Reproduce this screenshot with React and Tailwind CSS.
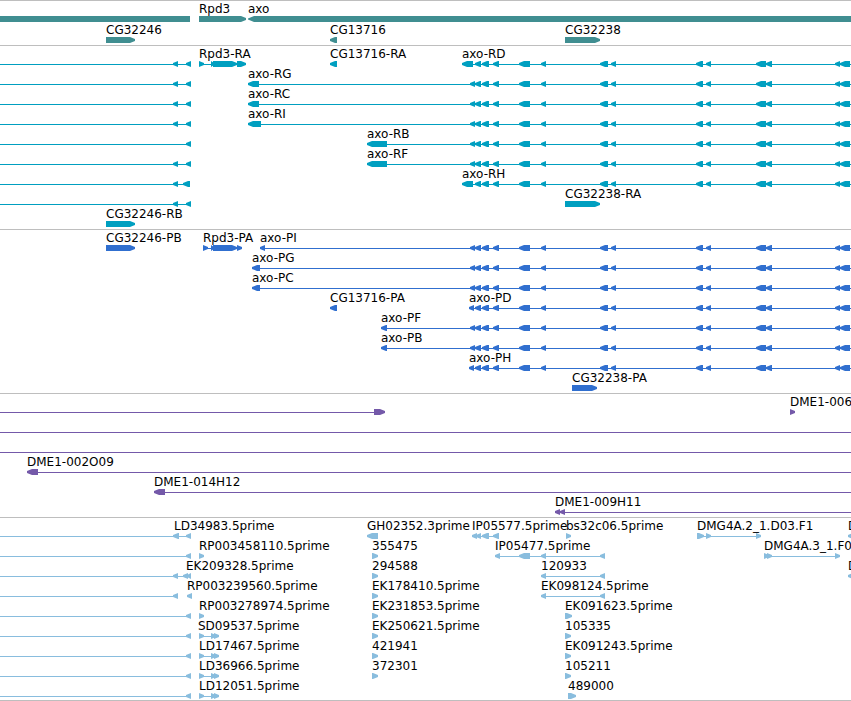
import React from "react";

// exons shared by every axo isoform, as [start, end, strand]
const AXO = [
  [475, 481, -1],
  [482, 489, -1],
  [493, 499, -1],
  [519, 530, -1],
  [541, 546, -1],
  [600, 608, -1],
  [611, 616, -1],
  [696, 703, -1],
  [706, 711, -1],
  [756, 766, -1],
  [766, 772, -1],
  [835, 840, -1],
  [840, 850, -1],
];

const END = "100%";

const axo = (name, x, first) => ({
  name,
  x,
  line: [x, END],
  exons: [...first, ...AXO],
});

const axoLong = (name, x, end) => axo(name, x, [[x, end, -1], [470, 475, -1]]);
const axoShort = (name, x, end) => axo(name, x, [[x, end, -1]]);

// unnamed transcript that runs in from the left edge
const incoming = (...exons) => ({
  line: [0, exons[exons.length - 1][1]],
  exons: exons.map(([a, b]) => [a, b, -1]),
});

const single = (name, x, end, dir) => ({ name, x, exons: [[x, end, dir]] });

const cloneRight = (name, x = 199) => ({
  name,
  x,
  line: [199, 219],
  exons: [[199, 204, 1], [211, 216, 1], [214, 219, 1]],
});

const TRACKS = [
  {
    id: "genes",
    color: "text-[#408e91]",
    pad: "pb-0.5",
    row: "h-[21px]",
    rows: [
      [
        { exons: [[0, 190, 0]] },
        single("Rpd3", 199, 246, 1),
        { name: "axo", x: 248, exons: [[248, END, -1]] },
      ],
      [
        single("CG32246", 106, 135, 1),
        single("CG13716", 330, 337, -1),
        single("CG32238", 565, 600, 1),
      ],
    ],
  },
  {
    id: "transcripts",
    color: "text-[#009fc0]",
    pad: "pb-[3px]",
    row: "h-5",
    rows: [
      [
        incoming([173, 178], [186, 191]),
        {
          name: "Rpd3-RA",
          x: 199,
          line: [199, 246],
          exons: [[199, 204, 1], [211, 214, 1], [213, 237, 1], [237, 246, 1]],
        },
        single("CG13716-RA", 330, 337, -1),
        axoShort("axo-RD", 462, 473),
      ],
      [incoming([173, 178], [186, 191]), axoLong("axo-RG", 248, 259)],
      [incoming([173, 178], [186, 191]), axoLong("axo-RC", 248, 259)],
      [incoming([173, 178], [186, 191]), axoLong("axo-RI", 248, 261)],
      [incoming([186, 191]), axoLong("axo-RB", 367, 387)],
      [incoming([173, 178], [186, 191]), axoLong("axo-RF", 367, 387)],
      [incoming([173, 178], [183, 190]), axoShort("axo-RH", 462, 473)],
      [incoming([173, 178], [186, 191]), single("CG32238-RA", 565, 600, 1)],
      [single("CG32246-RB", 106, 135, 1)],
    ],
  },
  {
    id: "proteins",
    color: "text-[#306fcf]",
    pad: "pb-[3px]",
    row: "h-5",
    rows: [
      [
        single("CG32246-PB", 106, 135, 1),
        {
          name: "Rpd3-PA",
          x: 203,
          line: [203, 242],
          exons: [[203, 208, 1], [211, 214, 1], [213, 237, 1], [237, 242, 1]],
        },
        axoLong("axo-PI", 260, 265),
      ],
      [axoLong("axo-PG", 252, 260)],
      [axoLong("axo-PC", 252, 260)],
      [single("CG13716-PA", 330, 337, -1), axoShort("axo-PD", 469, 474)],
      [axoLong("axo-PF", 381, 387)],
      [axoLong("axo-PB", 381, 387)],
      [axoShort("axo-PH", 469, 474)],
      [single("CG32238-PA", 572, 597, 1)],
    ],
  },
  {
    id: "bacs",
    color: "text-[#7459a9]",
    pad: "pb-[3px]",
    row: "h-5",
    rows: [
      [{ line: [0, 380], exons: [[374, 385, 1]] }, single("DME1-006", 790, 795, 1)],
      [{ line: [0, END], exons: [] }],
      [{ line: [0, END], exons: [] }],
      [{ name: "DME1-002O09", x: 27, line: [27, END], exons: [[27, 38, -1]] }],
      [{ name: "DME1-014H12", x: 154, line: [154, END], exons: [[154, 165, -1]] }],
      [{ name: "DME1-009H11", x: 555, line: [555, END], exons: [[555, 560, -1], [560, 565, -1]] }],
    ],
  },
  {
    id: "ests",
    color: "text-[#89bdde]",
    pad: "pb-0.5",
    row: "h-5",
    rows: [
      [
        { ...incoming([173, 179], [186, 191]), name: "LD34983.5prime", x: 174 },
        single("GH02352.3prime", 367, 378, -1),
        {
          name: "IP05577.5prime",
          x: 472,
          line: [472, 499],
          exons: [[472, 477, -1], [476, 481, -1], [482, 489, -1], [493, 499, -1]],
        },
        single("bs32c06.5prime", 566, 571, 1),
        {
          name: "DMG4A.2_1.D03.F1",
          x: 697,
          line: [697, 761],
          exons: [[697, 704, 1], [706, 711, 1], [756, 761, 1]],
        },
        single("D", 848, 854, -1),
      ],
      [
        incoming([186, 191]),
        single("RP003458110.5prime", 199, 204, 1),
        single("355475", 372, 378, 1),
        {
          name: "IP05477.5prime",
          x: 495,
          line: [495, 605],
          exons: [[495, 500, -1], [519, 530, -1], [541, 546, -1], [600, 605, -1]],
        },
        {
          name: "DMG4A.3_1.F0",
          x: 764,
          line: [764, 840],
          exons: [[764, 769, 1], [767, 772, 1], [835, 840, 1]],
        },
      ],
      [
        { ...incoming([173, 178], [183, 188], [187, 191]), name: "EK209328.5prime", x: 186 },
        single("294588", 372, 378, 1),
        { name: "120933", x: 541, line: [541, 605], exons: [[541, 546, -1], [600, 605, -1]] },
        single("D", 848, 854, -1),
      ],
      [
        incoming([173, 178]),
        single("RP003239560.5prime", 187, 192, -1),
        single("EK178410.5prime", 372, 378, 1),
        { name: "EK098124.5prime", x: 541, line: [541, 605], exons: [[541, 546, -1], [600, 605, -1]] },
      ],
      [
        incoming([186, 191]),
        single("RP003278974.5prime", 199, 204, 1),
        single("EK231853.5prime", 372, 378, 1),
        single("EK091623.5prime", 565, 572, 1),
      ],
      [
        incoming([186, 191]),
        cloneRight("SD09537.5prime", 198),
        single("EK250621.5prime", 372, 378, 1),
        single("105335", 565, 571, 1),
      ],
      [
        incoming([186, 191]),
        cloneRight("LD17467.5prime"),
        single("421941", 372, 378, 1),
        single("EK091243.5prime", 565, 571, 1),
      ],
      [
        incoming([186, 191]),
        cloneRight("LD36966.5prime"),
        single("372301", 372, 378, 1),
        single("105211", 565, 571, 1),
      ],
      [
        incoming([186, 191]),
        cloneRight("LD12051.5prime"),
        single("489000", 568, 576, 1),
      ],
    ],
  },
];

const Exon = ({ start, end, dir }) => {
  // open-ended bar: head first, then a rect up to the edge
  if (end === END) {
    return (
      <>
        <polygon points={`${start},2.5 ${start + 6},0 ${start + 6},6 ${start},3.5`} />
        <rect x={start + 6} y="0" width="100%" height="6" />
      </>
    );
  }
  if (dir === 0) return <rect x={start} y="0" width={end - start} height="6" />;

  // blunt arrow head, at most 5px long
  const head = Math.min(5, end - start);
  const tip = dir < 0 ? start : end;
  const neck = tip - dir * head;
  const tail = dir < 0 ? end : start;
  return (
    <polygon points={`${tip},2 ${neck},0 ${tail},0 ${tail},6 ${neck},6 ${tip},4`} />
  );
};

const Row = ({ features, height }) => (
  <div className={`relative ${height}`}>
    <svg className="absolute top-[15px] left-0 w-full h-1.5" fill="currentColor" aria-hidden="true">
      {features.map((f, i) => (
        <g key={i}>
          {f.line && (
            <line x1={f.line[0]} x2={f.line[1]} y1="3.5" y2="3.5" stroke="currentColor" />
          )}
          {f.exons.map(([start, end, dir], j) => (
            <Exon key={j} start={start} end={end} dir={dir} />
          ))}
        </g>
      ))}
    </svg>
    {features
      .filter((f) => f.name)
      .map((f) => (
        <span
          key={f.name}
          className="absolute top-0 text-xs leading-4 text-black whitespace-nowrap"
          style={{ left: f.x }}
        >
          {f.name}
        </span>
      ))}
  </div>
);

const App = () => (
  <main className="w-full overflow-hidden bg-white border-b border-[#bebebe] font-['DejaVu_Sans',sans-serif]">
    {TRACKS.map((track) => (
      <section key={track.id} className={`border-t border-[#bebebe] ${track.color} ${track.pad}`}>
        {track.rows.map((features, i) => (
          <Row key={i} features={features} height={track.row} />
        ))}
      </section>
    ))}
  </main>
);

export default App;
